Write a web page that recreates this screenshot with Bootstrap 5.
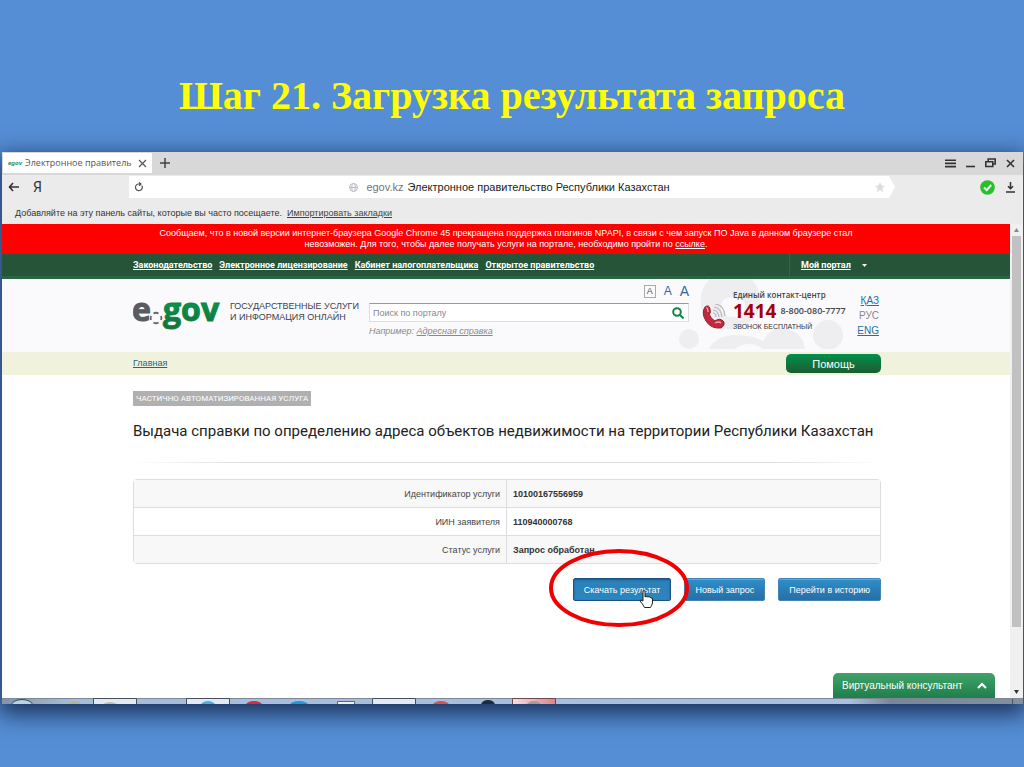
<!DOCTYPE html>
<html lang="ru">
<head>
<meta charset="utf-8">
<meta name="viewport" content="width=device-width, initial-scale=1">
<title>Шаг 21. Загрузка результата запроса</title>
<link href="https://cdn.jsdelivr.net/npm/bootstrap@5.3.0/dist/css/bootstrap.min.css" rel="stylesheet">
<style>
  body { background: #558ed5; font-family: "Liberation Sans", Arial, sans-serif; font-size: 10px; line-height: 12px; color: #333; }
  .slide { min-height: 100vh; overflow: hidden; }
  button, input { font-family: inherit; }
  .slide-title { font: bold 40px/44px "Liberation Serif", "Times New Roman", serif; color: #ff0; padding: 74px 0 34px; }
  .browser { margin: 0 1px 0 2px; background: #ebebeb; box-shadow: 0 7px 22px 3px rgba(24, 44, 80, .95); }

  .tab-strip { height: 23px; background: #d8d8d8; padding: 1px 8px 2px 1px; }
  .page-tab { width: 149px; background: #fff; padding: 0 5px; gap: 3px; color: #555; font: 9px/12px "Open Sans", sans-serif; }
  .tab-label { white-space: nowrap; }
  .tab-logo { font: bold italic 6px/8px "Liberation Sans", sans-serif; color: #1a8a45; }
  .plain-btn { border: 0; background: none; padding: 0; display: flex; color: #333; }
  .window-btns { gap: 10px; }

  .address-row { height: 24px; padding: 1px 8px 1px 6px; }
  .nav-tools { width: 121px; gap: 13px; }
  .ya { font: 14px/18px Roboto, sans-serif; }
  .address { height: 22px; background: #fff; clip-path: polygon(0 0, calc(100% - 6px) 0, 100% 50%, calc(100% - 6px) 100%, 0 100%); padding: 0 10px 0 5px; font-size: 11px; color: #222; }
  .address-tools { width: 120px; gap: 11px; }
  .bookmarks { height: 25px; padding: 2px 13px 0; font-size: 9px; color: #333; gap: 5px; }
  .bookmarks a { color: #444; }

  .viewport-row { min-height: 474px; background: #fff; }
  .scroll-track { width: 13px; background: #f0f0f0; padding: 4px 0; gap: 4px; }
  .scroll-thumb { width: 9px; height: 391px; background: #c1c1c1; }
  .wrap { width: 100%; max-width: 750px; margin: 0 auto; padding-left: 2px; }

  .notice { background: #f00; color: #fff; font-size: 9px; line-height: 11px; padding: 4px 150px; text-align: center; min-height: 30px; }
  .notice a { color: #fff; }
  .top-menu { background: #255438; border-bottom: 3px solid #2d6343; height: 25px; font: bold 9px/12px Roboto, sans-serif; }
  .top-menu a { color: #fff; }
  .menu-links { gap: 7px; }
  .my-portal { width: 92px; border-left: 1px solid #35654a; padding-left: 11px; gap: 11px; height: 22px; }

  .site-head { background: #fafafd; height: 73px; }
  .slogan { width: 140px; padding: 22px 0 0 9px; font-size: 9px; line-height: 11px; color: #3c3f4a; white-space: nowrap; }
  .search-col { width: 320px; }
  .font-sizes { height: 24px; padding: 3px 0; gap: 8px; color: #31689b; }
  .font-sizes button { color: #31689b; }
  .font-sizes .current { border: 1px solid #aaa; color: #555; width: 12px; height: 13px; justify-content: center; align-items: center; font-size: 9px; }
  .size-m { font-size: 12px; }
  .size-l { font-size: 14px; }
  .search-box { height: 19px; background: #fff; border: 1px solid #ddd; border-top: 1px solid #999; }
  .search-box input { border: 0; outline: 0; min-width: 0; padding: 0 3px; font-size: 9px; }
  .search-box input::placeholder { color: #888; }
  .sample { font-size: 9px; font-style: italic; color: #888; padding-top: 3px; }
  .sample a { color: #888; }
  .head-right { width: 192px; padding: 9px 2px 0 5px; }
  .ornament { right: 20px; top: 0; }
  .contact { padding: 2px 0 0 5px; white-space: nowrap; }
  .contact-title { font: 600 8px/10px "Open Sans", sans-serif; color: #444; }
  .short-num { font: bold 19px/22px "Open Sans", sans-serif; color: #a40008; }
  .long-num { font: 600 9px/12px "Open Sans", sans-serif; color: #444; }
  .free-call { font: 7px/10px "Liberation Sans", sans-serif; }
  .langs { font-size: 10px; line-height: 15px; padding-top: 5px; text-align: right; color: #888; }
  .langs a { color: #2a6ca3; }

  .crumbs { background: #f0f2dd; height: 23px; font-size: 9px; padding-top: 2px; }
  .crumbs a { color: #246688; padding-top: 3px; }
  .help-btn { width: 95px; height: 19px; border: 0; border-radius: 5px; background: linear-gradient(#02904a, #1c5c33); color: #fff; font-size: 11px; line-height: 16px; }

  .kind { background: #b0b0b0; color: #fff; font: 8px/15px Roboto, sans-serif; padding: 0 3px; margin-top: 16px; width: fit-content; }
  .service-name { font: 15px/20px Roboto, sans-serif; color: #222; margin: 15px 0 0; }
  .fade-line { height: 1px; margin: 21px 0 16px; background: linear-gradient(90deg, transparent, #ddd 15%, #ddd 85%, transparent); }
  .details { border: 1px solid #ddd; border-radius: 4px; border-collapse: separate; border-spacing: 0; width: 100%; font-size: 9px; line-height: 12px; }
  .details th, .details td { width: 50%; height: 28px; padding: 0 6px; border-top: 1px solid #ddd; vertical-align: middle; }
  .details th { font-weight: normal; text-align: right; color: #444; border-right: 1px solid #ddd; }
  .details td { font-weight: bold; }
  .details tr:first-child > * { border-top: 0; height: 27px; }
  .details tr:nth-child(odd) { background: #f8f8f8; }
  .actions { padding-top: 14px; gap: 13px; }
  .act { height: 23px; padding: 0 10px; border: 1px solid #4285b5; border-radius: 2px; background: linear-gradient(#2d8fcb, #286ea6); color: #fff; font-size: 9px; line-height: 20px; white-space: nowrap; box-shadow: inset 0 1px 0 #5ba8d6; }
  .act-first .act { border-color: #1c5180; background: linear-gradient(#2a81ba, #2b85bf); box-shadow: inset 0 1px 2px #1d5680; }
  .ring { left: -25px; top: -30px; pointer-events: none; }
  .consultant { right: 15px; bottom: 0; width: 162px; height: 25px; border: 0; border-radius: 5px 5px 0 0; background: linear-gradient(#41a36a, #1f7e4c); color: #fff; font-size: 10px; padding: 0 8px 0 9px; }
  .taskbar svg { height: 6px; width: 100%; }
  .taskbar { background: #a9c1df; }
</style>
</head>
<body>
<div class="slide">
<h1 class="slide-title text-center m-0">Шаг 21. Загрузка результата запроса</h1>

<main class="browser">
  <div class="tab-strip d-flex">
    <div class="page-tab d-flex align-items-center">
      <span class="tab-logo">egov</span>
      <span class="tab-label flex-grow-1">Электронное правитель</span>
      <button class="plain-btn" aria-label="Закрыть вкладку"><svg width="9" height="9" viewBox="0 0 9 9" stroke="#555" stroke-width="1.2"><path d="M1 1l7 7M8 1L1 8"/></svg></button>
    </div>
    <button class="plain-btn align-items-center ms-2" aria-label="Новая вкладка"><svg width="10" height="10" viewBox="0 0 10 10" stroke="#444" stroke-width="1.5"><path d="M5 0v10M0 5h10"/></svg></button>
    <div class="window-btns d-flex align-items-center ms-auto">
      <button class="plain-btn" aria-label="Меню"><svg width="11" height="9" viewBox="0 0 11 9" stroke="#333" stroke-width="1.6"><path d="M0 1.2h11M0 4.4h11M0 7.6h11"/></svg></button>
      <button class="plain-btn" aria-label="Свернуть"><svg width="9" height="10" viewBox="0 0 9 10" stroke="#333" stroke-width="1.6"><path d="M0 8.5h9"/></svg></button>
      <button class="plain-btn" aria-label="Развернуть"><svg width="11" height="10" viewBox="0 0 11 10" fill="none" stroke="#333" stroke-width="1.6"><path d="M3.2 3.5V1h7v5H8.500M.8 3.800h7v4.700h-7z"/></svg></button>
      <button class="plain-btn" aria-label="Закрыть"><svg width="9" height="9" viewBox="0 0 9 9" stroke="#333" stroke-width="1.6"><path d="M1 1l7 7M8 1L1 8"/></svg></button>
    </div>
  </div>

  <div class="address-row d-flex align-items-center">
    <div class="nav-tools d-flex align-items-center flex-shrink-0">
      <button class="plain-btn" aria-label="Назад"><svg width="12" height="10" viewBox="0 0 12 10" fill="none" stroke="#333" stroke-width="1.6"><path d="M5 1L1.500 5 5 9M1.500 5H11"/></svg></button>
      <button class="plain-btn ya">Я</button>
    </div>
    <div class="address d-flex align-items-center flex-grow-1">
      <svg width="10" height="10" viewBox="0 0 10 10" fill="none" stroke="#555" stroke-width="1.200"><path d="M7.800 3.500A3.400 3.400 0 1 1 4 2H7M5 .3L7 2 5 3.800"/></svg>
      <span class="flex-grow-1 d-flex justify-content-center align-items-center">
        <svg class="me-2" width="9" height="9" viewBox="0 0 9 9" fill="none" stroke="#bbb"><circle cx="4.500" cy="4.500" r="4"/><ellipse cx="4.500" cy="4.500" rx="1.800" ry="4"/><path d="M0 4.500h9"/></svg>
        <span class="text-secondary me-1">egov.kz</span>Электронное правительство Республики Казахстан
      </span>
      <svg width="10" height="10" viewBox="0 0 10 10" fill="#ddd"><path d="M5 0l1.500 3.500 3.500.3-2.700 2.400.9 3.800L5 8l-3.200 2 .9-3.800L0 3.800l3.500-.3z"/></svg>
    </div>
    <div class="address-tools d-flex align-items-center justify-content-end flex-shrink-0">
      <svg width="15" height="15" viewBox="0 0 15 15"><circle cx="7.500" cy="7.500" r="7.300" fill="#26c02b"/><path d="M4 7.500l2.700 2.600L11.200 5" fill="none" stroke="#fff" stroke-width="2"/></svg>
      <svg width="9" height="11" viewBox="0 0 9 11" fill="none" stroke="#333" stroke-width="1.500"><path d="M4.500 0v6.500M2 4.300l2.500 2.500L7 4.300M0 10h9"/></svg>
    </div>
  </div>

  <div class="bookmarks d-flex align-items-center">
    <span>Добавляйте на эту панель сайты, которые вы часто посещаете.</span>
    <a href="#">Импортировать закладки</a>
  </div>

  <div class="viewport-row d-flex">
    <div class="flex-grow-1 position-relative">
      <div class="notice">Сообщаем, что в новой версии интернет-браузера Google Chrome 45 прекращена поддержка плагинов NPAPI, в связи с чем запуск ПО Java в данном браузере стал невозможен. Для того, чтобы далее получать услуги на портале, необходимо пройти по <a href="#">ссылке</a>.</div>

      <nav class="top-menu">
        <div class="wrap d-flex align-items-center">
          <div class="menu-links d-flex">
            <a href="#">Законодательство</a>
            <a href="#">Электронное лицензирование</a>
            <a href="#">Кабинет налогоплательщика</a>
            <a href="#">Открытое правительство</a>
          </div>
          <div class="my-portal ms-auto d-flex align-items-center">
            <a href="#">Мой портал</a>
            <svg width="5" height="3" viewBox="0 0 5 3" fill="#fff"><path d="M0 0h5L2.500 3z"/></svg>
          </div>
        </div>
      </nav>

      <header class="site-head">
        <div class="wrap d-flex position-relative">
          <svg class="flex-shrink-0" width="88" height="60" viewBox="0 0 88 60" fill="none">
            <defs><linearGradient id="g" x1="0" y1="20" x2="0" y2="50" gradientUnits="userSpaceOnUse"><stop stop-color="#009a4c"/><stop offset="1" stop-color="#1f6b3a"/></linearGradient></defs>
            <g font-family="'Open Sans', sans-serif" font-weight="700" font-size="32">
              <text x="-1" y="42" fill="#585b60" stroke="#585b60">e</text>
              <text x="30" y="42" fill="url(#g)" stroke="#0b8745">gov</text>
            </g>
            <circle cx="23" cy="39" r="6.500" fill="#fafafd"/>
            <g stroke="#666" stroke-width="1.800"><path d="M20.500 34.500a5 5 0 0 1 5 0M28 37a5 5 0 0 1 0 4M25.500 43.500a5 5 0 0 1-5 0M18 41a5 5 0 0 1 0-4"/></g>
          </svg>
          <div class="slogan flex-shrink-0">ГОСУДАРСТВЕННЫЕ УСЛУГИ<br>И ИНФОРМАЦИЯ ОНЛАЙН</div>
          <form class="search-col ms-2">
            <div class="font-sizes d-flex align-items-center justify-content-end">
              <button type="button" class="plain-btn current">A</button>
              <button type="button" class="plain-btn size-m">A</button>
              <button type="button" class="plain-btn size-l">A</button>
            </div>
            <div class="search-box d-flex align-items-center">
              <input type="search" class="flex-grow-1" placeholder="Поиск по порталу" aria-label="Поиск по порталу">
              <button type="button" class="plain-btn me-1" aria-label="Найти"><svg width="12" height="12" viewBox="0 0 12 12" fill="none" stroke="#168447" stroke-width="2"><circle cx="5" cy="5" r="3.800"/><path d="M7.800 7.800l3.700 3.700"/></svg></button>
            </div>
            <div class="sample">Например: <a href="#">Адресная справка</a></div>
          </form>
          <svg class="ornament position-absolute" width="182" height="70" viewBox="0 0 182 70" fill="#eeeef1">
            <path d="M22 28Q20 10 31 0H72Q84 12 80 30Q72 50 50 50T22 28zM42 28q0 10 12 10t12-10-12-10-12 10z" fill-rule="evenodd"/>
            <circle cx="10" cy="60" r="10"/><circle cx="149" cy="56" r="15"/>
            <path d="M30 70Q38 56 56 56T84 62Q92 46 108 50T126 70H84Q70 60 56 70z"/>
          </svg>
          <div class="head-right ms-auto d-flex position-relative">
            <svg class="flex-shrink-0 mt-3 ms-2" width="26" height="26" viewBox="0 0 26 26" fill="none">
              <path d="M3 3Q7 0 8 5T7 10Q9 15 13 17Q18 13 22 18Q23 22 19 24Q9 25 4 17T3 3z" fill="#c5283d" stroke="#8d2033"/>
              <path d="M4 4Q6 3 6 8M13 19Q17 17 19 19" stroke="#f3a5ab" stroke-width="1.300"/>
              <path d="M11 6q5 0 6 7M12 3q7 1 8 10M13 0q9 1 10 12M11 9q3 0 3 4" stroke="#b8b8bc" stroke-width="1.200"/>
            </svg>
            <div class="contact">
              <div class="contact-title">Единый контакт-центр</div>
              <div class="d-flex align-items-center gap-1"><span class="short-num">1414</span><span class="long-num">8-800-080-7777</span></div>
              <div class="free-call">ЗВОНОК БЕСПЛАТНЫЙ</div>
            </div>
            <div class="langs ms-auto"><a href="#">ҚАЗ</a><br>РУС<br><a href="#">ENG</a></div>
          </div>
        </div>
      </header>

      <div class="crumbs">
        <div class="wrap d-flex justify-content-between">
          <a href="#">Главная</a>
          <button class="help-btn">Помощь</button>
        </div>
      </div>

      <section class="wrap">
        <div class="kind">ЧАСТИЧНО АВТОМАТИЗИРОВАННАЯ УСЛУГА</div>
        <h2 class="service-name">Выдача справки по определению адреса объектов недвижимости на территории Республики Казахстан</h2>
        <div class="fade-line"></div>
        <table class="details">
          <tr><th scope="row">Идентификатор услуги</th><td>10100167556959</td></tr>
          <tr><th scope="row">ИИН заявителя</th><td>110940000768</td></tr>
          <tr><th scope="row">Статус услуги</th><td>Запрос обработан</td></tr>
        </table>
        <div class="actions d-flex justify-content-end">
          <div class="act-first position-relative">
            <button class="act">Скачать результат</button>
            <svg class="ring position-absolute" width="142" height="80" viewBox="0 0 142 80" fill="none">
              <ellipse cx="71" cy="40" rx="68" ry="37" stroke="#f00000" stroke-width="4"/>
              <path d="M95 43q1.500-1 2 0v6q1-1.500 2 0 1-1 2 0 1-1 2 1 1.500-.5 1.500 1v4q-1 3-2 4.500h-6q-2-4-4.500-6.500 0-2 3 0z" fill="#fff" stroke="#222"/>
            </svg>
          </div>
          <button class="act">Новый запрос</button>
          <button class="act">Перейти в историю</button>
        </div>
      </section>

      <button class="consultant position-absolute d-flex align-items-center justify-content-between">Виртуальный консультант
        <svg width="10" height="7" viewBox="0 0 10 7" fill="none" stroke="#fff" stroke-width="2.200"><path d="M1 6l4-4 4 4"/></svg>
      </button>
    </div>
    <div class="scroll-track d-flex flex-column align-items-center flex-shrink-0">
      <svg width="5" height="4" viewBox="0 0 5 4" fill="#888"><path d="M0 4h5L2.500 0z"/></svg>
      <div class="scroll-thumb"></div>
      <svg class="mt-auto" width="5" height="4" viewBox="0 0 5 4" fill="#333"><path d="M0 0h5L2.500 4z"/></svg>
    </div>
  </div>

  <div class="taskbar d-flex">
    <svg viewBox="0 0 1021 6" preserveAspectRatio="none">
      <defs>
        <linearGradient id="tb"><stop stop-color="#8294aa"/><stop offset=".03" stop-color="#96a6ba"/><stop offset=".07" stop-color="#a5bddb"/><stop offset=".83" stop-color="#a9c1df"/><stop offset=".87" stop-color="#7b8797"/><stop offset="1" stop-color="#8290a2"/></linearGradient>
        <linearGradient id="rd"><stop stop-color="#f1dfe3"/><stop offset="1" stop-color="#de8388"/></linearGradient>
      </defs>
      <path fill="url(#tb)" d="M0 0h1021v6H0z"/>
      <path fill="#7d8894" d="M0 0h1021v1H0z"/>
      <path d="M91.500 6V.5h43V6M184.500 6V.5h43V6M370.500 6V.5h43V6" fill="#e2e9f2" stroke="#46515f"/>
      <path d="M510.500 6V.5h43V6" fill="url(#rd)" stroke="#6b4a52"/>
      <ellipse cx="20" cy="8" rx="11" ry="6.500" fill="#b9d3e6" stroke="#34475c"/>
      <ellipse cx="72" cy="7" rx="7" ry="3.500" fill="#b5b393"/>
      <ellipse cx="108" cy="7" rx="7" ry="3" fill="#c8bea4"/>
      <ellipse cx="206" cy="7" rx="7" ry="4" fill="#4cb1dc"/>
      <ellipse cx="252" cy="7" rx="8" ry="4" fill="#dd2640"/>
      <ellipse cx="297" cy="7" rx="9" ry="4" fill="#1b9bdc"/>
      <path d="M335.500 6V3.500h17V6" fill="#eee" stroke="#5c6674"/>
      <ellipse cx="439" cy="7" rx="8" ry="4" fill="#dc4f4b"/>
      <ellipse cx="486" cy="7" rx="7" ry="5" fill="#1c2b44"/>
      <ellipse cx="532" cy="7" rx="7" ry="4" fill="#a59c98"/>
      <path d="M1010.500 1v5" stroke="#4a5565"/>
    </svg>
  </div>
</main>
</div>
<script src="https://cdn.jsdelivr.net/npm/bootstrap@5.3.0/dist/js/bootstrap.bundle.min.js"></script>
</body>
</html>
